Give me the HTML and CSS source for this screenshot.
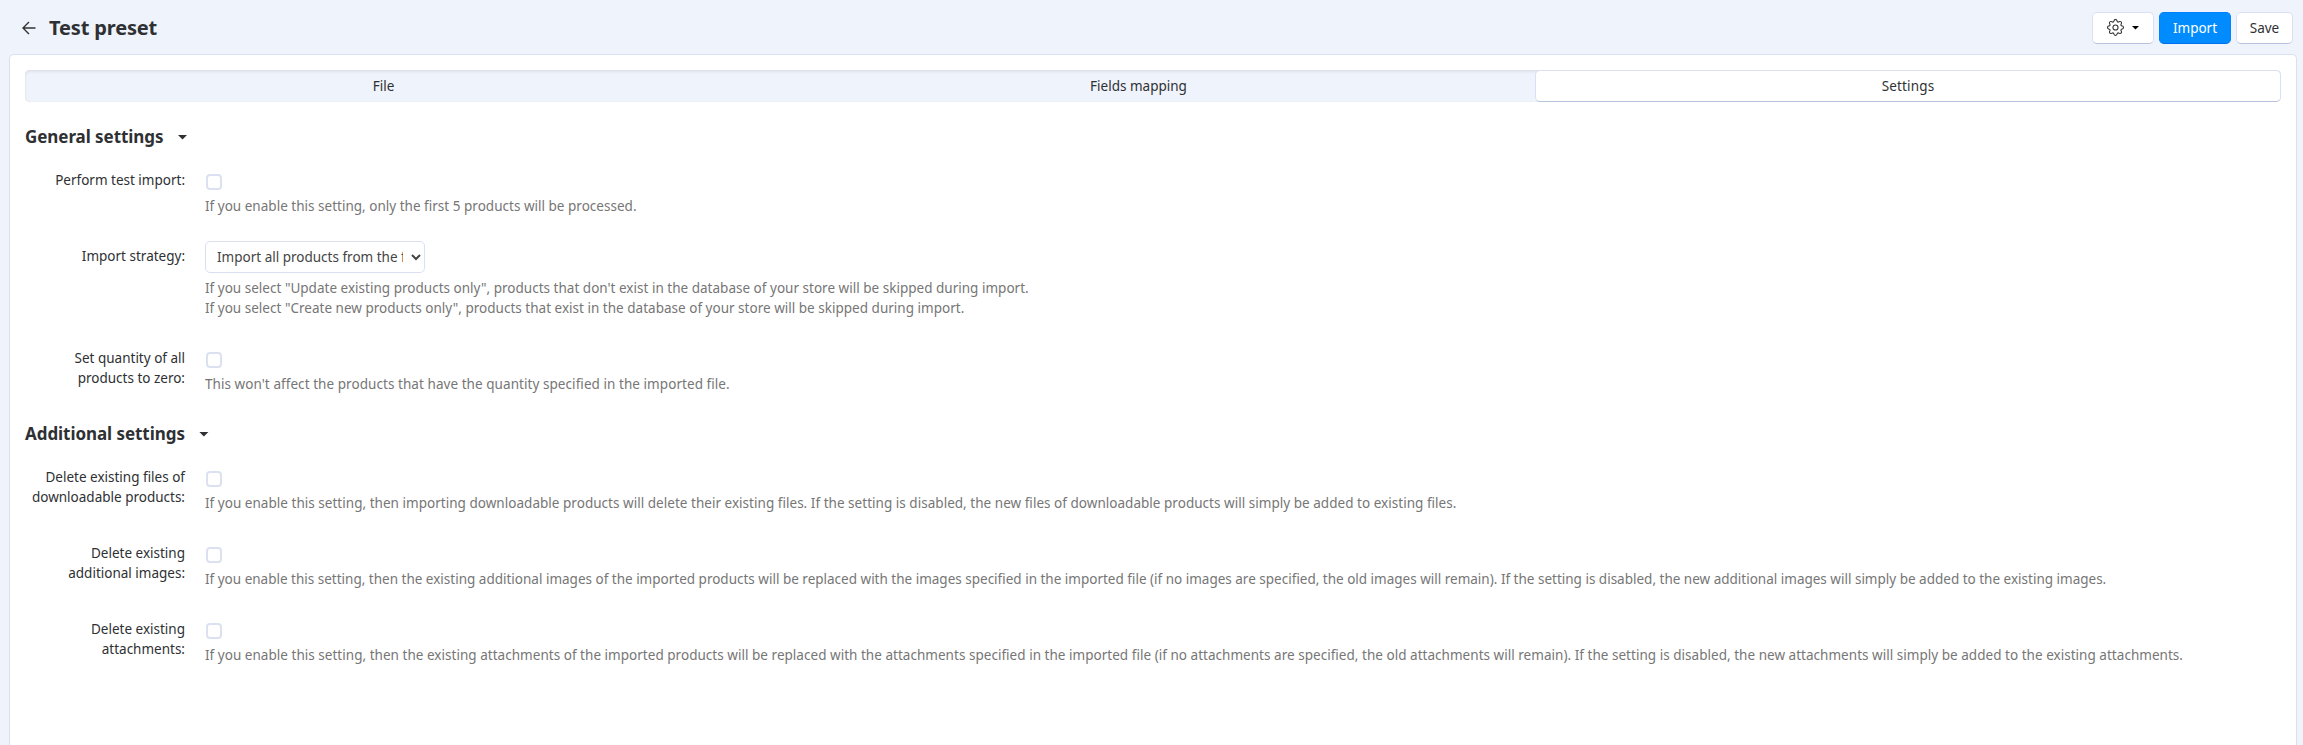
FILE: index.html
```html
<!DOCTYPE html>
<html lang="en">
<head>
<meta charset="utf-8">
<title>Test preset</title>
<link rel="stylesheet" href="styles.css">
</head>
<body>
<header class="topbar">
  <svg class="back" viewBox="0 0 14 14" width="14" height="14"><path d="M13.5 7H1M7 1L1 7l6 6"/></svg>
  <h1 class="title">Test preset</h1>
  <div class="actions">
    <button class="btn btn-gear">
      <svg class="gear" viewBox="0 0 16 16" width="17" height="17"><path d="M9.796 1.343c-.527-1.79-3.065-1.79-3.592 0l-.094.319a.873.873 0 0 1-1.255.52l-.292-.16c-1.64-.892-3.433.902-2.54 2.541l.159.292a.873.873 0 0 1-.52 1.255l-.319.094c-1.79.527-1.79 3.065 0 3.592l.319.094a.873.873 0 0 1 .52 1.255l-.16.292c-.892 1.64.901 3.434 2.541 2.54l.292-.159a.873.873 0 0 1 1.255.52l.094.319c.527 1.79 3.065 1.79 3.592 0l.094-.319a.873.873 0 0 1 1.255-.52l.292.16c1.64.893 3.434-.902 2.54-2.541l-.159-.292a.873.873 0 0 1 .52-1.255l.319-.094c1.79-.527 1.79-3.065 0-3.592l-.319-.094a.873.873 0 0 1-.52-1.255l.16-.292c.893-1.64-.902-3.433-2.541-2.54l-.292.159a.873.873 0 0 1-1.255-.52l-.094-.319zm-2.633.283c.246-.835 1.428-.835 1.674 0l.094.319a1.873 1.873 0 0 0 2.693 1.115l.291-.16c.764-.415 1.6.42 1.184 1.185l-.159.292a1.873 1.873 0 0 0 1.116 2.692l.318.094c.835.246.835 1.428 0 1.674l-.319.094a1.873 1.873 0 0 0-1.115 2.693l.16.291c.415.764-.42 1.6-1.185 1.184l-.291-.159a1.873 1.873 0 0 0-2.693 1.116l-.094.318c-.246.835-1.428.835-1.674 0l-.094-.319a1.873 1.873 0 0 0-2.692-1.115l-.292.16c-.764.415-1.6-.42-1.184-1.185l.159-.291A1.873 1.873 0 0 0 1.945 8.93l-.319-.094c-.835-.246-.835-1.428 0-1.674l.319-.094A1.873 1.873 0 0 0 3.06 4.377l-.16-.292c-.415-.764.42-1.6 1.185-1.184l.292.159a1.873 1.873 0 0 0 2.692-1.115l.094-.319z"/><circle class="gear-hub" cx="8" cy="8" r="2.4"/></svg>
      <i class="caret caret-sm"></i>
    </button>
    <button class="btn btn-primary">Import</button>
    <button class="btn btn-save">Save</button>
  </div>
</header>
<main class="card">
  <nav class="tabs">
    <a class="tab">File</a>
    <a class="tab">Fields mapping</a>
    <a class="tab tab-active">Settings</a>
  </nav>
  <section class="section">
    <h2 class="heading">General settings<i class="caret"></i></h2>
    <div class="row">
      <label class="label">Perform test import:</label>
      <div class="field"><i class="check"></i><p class="help help-a">If you enable this setting, only the first 5 products will be processed.</p></div>
    </div>
    <div class="row">
      <label class="label">Import strategy:</label>
      <div class="field">
        <div class="select"><span class="select-text">Import all products from the file</span><svg class="chevron" viewBox="0 0 10 7" width="10" height="7"><path d="M1 1l4 4 4-4"/></svg></div>
        <p class="help help-a">If you select "Update existing products only", products that don't exist in the database of your store will be skipped during import.<br>If you select "Create new products only", products that exist in the database of your store will be skipped during import.</p>
      </div>
    </div>
    <div class="row">
      <label class="label">Set quantity of all<br>products to zero:</label>
      <div class="field"><i class="check"></i><p class="help help-c">This won't affect the products that have the quantity specified in the imported file.</p></div>
    </div>
  </section>
  <section class="section">
    <h2 class="heading">Additional settings<i class="caret"></i></h2>
    <div class="row">
      <label class="label">Delete existing files of<br>downloadable products:</label>
      <div class="field"><i class="check"></i><p class="help help-b">If you enable this setting, then importing downloadable products will delete their existing files. If the setting is disabled, the new files of downloadable products will simply be added to existing files.</p></div>
    </div>
    <div class="row">
      <label class="label">Delete existing<br>additional images:</label>
      <div class="field"><i class="check"></i><p class="help">If you enable this setting, then the existing additional images of the imported products will be replaced with the images specified in the imported file (if no images are specified, the old images will remain). If the setting is disabled, the new additional images will simply be added to the existing images.</p></div>
    </div>
    <div class="row">
      <label class="label">Delete existing<br>attachments:</label>
      <div class="field"><i class="check"></i><p class="help help-b">If you enable this setting, then the existing attachments of the imported products will be replaced with the attachments specified in the imported file (if no attachments are specified, the old attachments will remain). If the setting is disabled, the new attachments will simply be added to the existing attachments.</p></div>
    </div>
  </section>
</main>
</body>
</html>
```
FILE: styles.css
```css
* { box-sizing: border-box; }
body {
  margin: 0;
  height: 745px;
  overflow: hidden;
  display: flex;
  flex-direction: column;
  background: #eff3fb;
  color: #2e3033;
  font: 13.5px/20px "Noto Sans", sans-serif;
}
h1, h2, p { margin: 0; }
.topbar { height: 54px; flex: none; display: flex; align-items: center; padding: 1px 10px 0 22px; }
.back { fill: none; stroke: #333; stroke-width: 1.4; }
.title { margin-left: 13px; font-size: 20px; line-height: 28px; letter-spacing: -.15px; white-space: nowrap; }
.actions { margin-left: auto; display: flex; gap: 5px; }
.btn {
  height: 32px;
  display: flex;
  align-items: center;
  justify-content: center;
  padding: 0;
  border: 1px solid #d9e0f1;
  border-bottom-color: #b7c1dc;
  border-radius: 5px;
  background: #fff;
  color: #2e3033;
  font: inherit;
}
.btn-gear { width: 62px; gap: 8px; }
.btn-primary { width: 72px; background: #008cff; border-color: #0080ff; border-bottom-color: #0070f0; color: #fff; }
.btn-save { width: 57px; }
.gear { fill: #333; }
.gear-hub { fill: none; stroke: #333; stroke-width: 1; }
.caret { flex: none; width: 10px; height: 5px; background: #2e3033; clip-path: polygon(0 0, 100% 0, 50% 100%); }
.caret-sm { width: 8px; height: 4px; background: #000; }
.card {
  flex: 1;
  margin: 0 6px 0 9px;
  padding: 15px 15px 0;
  border: 1px solid #d9e0f1;
  border-bottom: 0;
  border-radius: 5px 5px 0 0;
  background: #fff;
}
.tabs {
  height: 32px;
  display: grid;
  grid-template-columns: 717px 793px 1fr;
  border-radius: 5px;
  background: #eff3fb;
  box-shadow: inset 0 0 1px #c8ccd6, inset 0 2px 3px rgba(0, 0, 0, .07);
}
.tab { display: flex; align-items: center; justify-content: center; }
.tab-active {
  border: 1px solid #d9e0f1;
  border-bottom-color: #b7c1dc;
  border-radius: 5px;
  background: #fff;
  letter-spacing: .15px;
}
.section { margin-top: 25px; }
.section + .section { margin-top: 30px; }
.heading {
  height: 20px;
  margin-bottom: 23px;
  display: flex;
  align-items: center;
  gap: 14px;
  font-size: 17px;
  line-height: 20px;
  letter-spacing: -.06px;
}
.row { display: grid; grid-template-columns: 160px 1fr; column-gap: 20px; }
.row + .row { margin-top: 30px; }
.label { text-align: right; white-space: nowrap; }
.check { display: block; width: 16px; height: 16px; margin: 4px 0 6px 1px; border: 2px solid #dce1f2; border-radius: 4px; }
.help { color: #767676; white-space: nowrap; }
.help-a { letter-spacing: .015px; }
.help-b { letter-spacing: .03px; }
.help-c { letter-spacing: .06px; }
.select {
  width: 220px;
  height: 32px;
  margin: -5px 0 5px;
  padding: 0 3px 0 11px;
  display: flex;
  align-items: center;
  justify-content: space-between;
  border: 1px solid #d9e0f1;
  border-radius: 5px;
  color: #444;
}
.select-text { width: 186px; overflow: hidden; white-space: nowrap; }
.chevron { fill: none; stroke: #444; stroke-width: 2; }
```
